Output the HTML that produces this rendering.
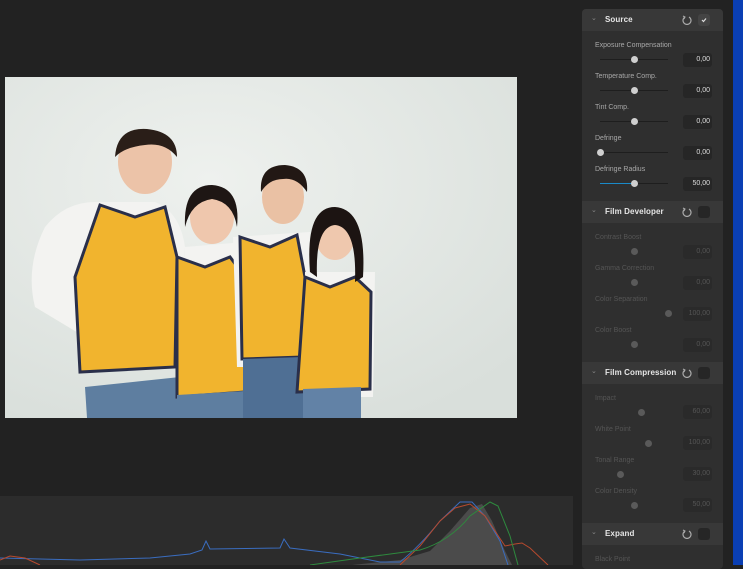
<html><head><style>
*{margin:0;padding:0;box-sizing:border-box}
body{width:743px;height:565px;background:#222;position:relative;overflow:hidden;font-family:"Liberation Sans",sans-serif}
.a{position:absolute}
.panel{left:582px;top:9px;width:141px;height:560px;background:#2f2f2f;border-radius:4px}
.hd{position:absolute;left:582px;width:141px;height:22px;background:#383838}
.hd .t{position:absolute;left:23px;top:6px;font-size:8px;font-weight:bold;color:#e6e6e6;letter-spacing:0.1px}
.hd .c{position:absolute;left:9px;top:5px;font-size:7px;color:#888}
.hd .b{position:absolute;left:116px;top:5px;width:12px;height:12px;border-radius:3px;background:#262626}
.hd svg.r{position:absolute;left:100px;top:6px}
.lb{position:absolute;left:595px;font-size:7px;color:#a8a8a8}
.tr{position:absolute;left:600px;width:68px;height:1px;background:#1e1e1e}
.kn{position:absolute;width:7px;height:7px;border-radius:50%;background:#cfcfcf}
.vb{position:absolute;left:683px;width:29px;height:14px;background:#262626;border-radius:3px;font-size:7px;color:#ddd;text-align:right;padding:3px 2px 0 0}
.dim .lb{color:#555}.dim .kn{background:#5a5a5a}.dim .vb{color:#555;background:#2a2a2a}
</style></head><body>
<div class="a" style="left:733px;top:0;width:10px;height:565px;background:#0a3fb4"></div>
<div class="a" style="left:5px;top:77px;width:512px;height:341px;background:#e3e7e3;overflow:hidden">
<svg width="512" height="341" viewBox="0 0 512 341">
<defs><radialGradient id="g" cx="0.4" cy="0.3" r="0.8"><stop offset="0" stop-color="#eef1ee"/><stop offset="1" stop-color="#d9dfdb"/></radialGradient></defs>
<rect width="512" height="341" fill="url(#g)"/>
<path d="M40 150 Q60 125 90 125 L150 125 Q175 135 180 170 L175 250 L80 260 L30 230 Q20 190 40 150Z" fill="#f3f3f1"/>
<path d="M80 310 L175 300 L172 341 L82 341Z" fill="#5e7ea0"/>
<path d="M95 128 L130 140 L160 130 L172 180 L170 290 L75 295 L70 200 Z" fill="#f1b42e" stroke="#2a2f4a" stroke-width="3"/>
<ellipse cx="140" cy="85" rx="27" ry="32" fill="#ecc3a8"/>
<path d="M110 80 Q112 50 142 52 Q172 55 172 80 Q160 65 140 68 Q120 70 110 80Z" fill="#2a1e18"/>
<path d="M180 170 L240 165 L245 330 L175 330Z" fill="#f3f3f1"/>
<path d="M172 180 L200 190 L225 180 L240 200 L240 315 L172 320 Z" fill="#f1b42e" stroke="#2a2f4a" stroke-width="3"/>
<path d="M172 318 L240 314 L240 341 L172 341Z" fill="#5e7ea0"/>
<ellipse cx="207" cy="140" rx="22" ry="27" fill="#efc7ad"/>
<path d="M180 150 Q178 108 207 108 Q236 110 232 150 Q228 125 207 122 Q186 125 180 150Z" fill="#1e1614"/>
<path d="M228 160 L305 155 L302 290 L232 290Z" fill="#f3f3f1"/>
<path d="M235 160 L265 170 L292 158 L300 200 L298 280 L237 282 Z" fill="#f1b42e" stroke="#2a2f4a" stroke-width="3"/>
<path d="M238 282 L298 280 L300 341 L238 341Z" fill="#4f6f94"/>
<ellipse cx="278" cy="120" rx="21" ry="27" fill="#eac1a4"/>
<path d="M256 115 Q254 88 280 88 Q304 90 302 115 Q292 100 278 102 Q264 102 256 115Z" fill="#221814"/>
<path d="M300 195 L370 195 L368 320 L298 320Z" fill="#f3f3f1"/>
<path d="M300 200 L325 210 L350 200 L366 215 L365 312 L292 315 Z" fill="#f1b42e" stroke="#2a2f4a" stroke-width="3"/>
<path d="M298 312 L356 310 L356 341 L298 341Z" fill="#6282a6"/>
<ellipse cx="330" cy="158" rx="20" ry="25" fill="#efc8ae"/>
<path d="M305 195 Q300 130 330 130 Q362 132 358 200 L350 205 Q352 150 330 148 Q310 150 312 200Z" fill="#1c1412"/>
</svg></div>
<div class="a" style="left:0;top:496px;width:573px;height:69px;background:#2c2c2c">
<svg width="573" height="69" viewBox="0 0 573 69">
<path d="M352 69 L400 64 L430 55 L450 35 L470 12 L482 8 L492 25 L505 55 L512 69Z" fill="#4b4b4b"/>
<path d="M0 62 L80 64 L150 62 L190 58 L202 54 L206 45 L210 53 L280 52 L284 43 L290 52 L340 58 L380 66 L400 66 Q420 50 440 25 L460 6 L472 6 L485 20 L500 45 L505 60 L508 69" fill="none" stroke="#3a6dc0" stroke-width="1"/>
<path d="M0 64 L10 60 L25 62 L40 69 M400 69 L420 50 L440 25 L455 12 L470 8 L485 20 L505 50 L515 48 L522 47 L530 52 L548 69" fill="none" stroke="#b84a2e" stroke-width="1"/>
<path d="M310 69 L360 62 L420 54 Q450 45 470 20 L490 6 L498 10 L510 40 L518 69" fill="none" stroke="#2e8a3e" stroke-width="1"/>
</svg></div>
<div class="a panel"></div>
<div class="hd" style="top:9px;border-radius:4px 4px 0 0"><span class="c">&#8964;</span><span class="t">Source</span><svg class="r" width="10" height="10" viewBox="0 0 10 10"><path d="M3 2 A4 4 0 1 0 7 2" fill="none" stroke="#aaa" stroke-width="1.2"/><path d="M1 1 L3 2 L2 4" fill="none" stroke="#aaa"/></svg><span class="b" style="background:#444"><svg width="12" height="12"><path d="M4 6 L5.5 7.5 L8 4.5" stroke="#ddd" fill="none" stroke-width="1.2"/></svg></span></div>
<div class="lb" style="top:42px">Exposure Compensation</div><div class="tr" style="top:59px"></div><div class="kn" style="left:631px;top:56px"></div><div class="vb" style="top:53px">0,00</div>
<div class="lb" style="top:73px">Temperature Comp.</div><div class="tr" style="top:90px"></div><div class="kn" style="left:631px;top:87px"></div><div class="vb" style="top:84px">0,00</div>
<div class="lb" style="top:104px">Tint Comp.</div><div class="tr" style="top:121px"></div><div class="kn" style="left:631px;top:118px"></div><div class="vb" style="top:115px">0,00</div>
<div class="lb" style="top:135px">Defringe</div><div class="tr" style="top:152px"></div><div class="kn" style="left:597px;top:149px"></div><div class="vb" style="top:146px">0,00</div>
<div class="lb" style="top:166px">Defringe Radius</div><div class="tr" style="top:183px"></div><div class="a" style="left:600px;top:183px;width:34px;height:1px;background:#1a8ac8"></div><div class="kn" style="left:631px;top:180px"></div><div class="vb" style="top:177px">50,00</div>

<div class="hd" style="top:201px"><span class="c">&#8964;</span><span class="t">Film Developer</span><svg class="r" width="10" height="10" viewBox="0 0 10 10"><path d="M3 2 A4 4 0 1 0 7 2" fill="none" stroke="#aaa" stroke-width="1.2"/><path d="M1 1 L3 2 L2 4" fill="none" stroke="#aaa"/></svg><span class="b"></span></div>
<div class="dim">
<div class="lb" style="top:234px">Contrast Boost</div><div class="kn" style="left:631px;top:248px"></div><div class="vb" style="top:245px">0,00</div>
<div class="lb" style="top:265px">Gamma Correction</div><div class="kn" style="left:631px;top:279px"></div><div class="vb" style="top:276px">0,00</div>
<div class="lb" style="top:296px">Color Separation</div><div class="kn" style="left:665px;top:310px"></div><div class="vb" style="top:307px">100,00</div>
<div class="lb" style="top:327px">Color Boost</div><div class="kn" style="left:631px;top:341px"></div><div class="vb" style="top:338px">0,00</div>
</div>
<div class="hd" style="top:362px"><span class="c">&#8964;</span><span class="t">Film Compression</span><svg class="r" width="10" height="10" viewBox="0 0 10 10"><path d="M3 2 A4 4 0 1 0 7 2" fill="none" stroke="#aaa" stroke-width="1.2"/><path d="M1 1 L3 2 L2 4" fill="none" stroke="#aaa"/></svg><span class="b"></span></div>
<div class="dim">
<div class="lb" style="top:395px">Impact</div><div class="kn" style="left:638px;top:409px"></div><div class="vb" style="top:405px">60,00</div>
<div class="lb" style="top:426px">White Point</div><div class="kn" style="left:645px;top:440px"></div><div class="vb" style="top:436px">100,00</div>
<div class="lb" style="top:457px">Tonal Range</div><div class="kn" style="left:617px;top:471px"></div><div class="vb" style="top:467px">30,00</div>
<div class="lb" style="top:488px">Color Density</div><div class="kn" style="left:631px;top:502px"></div><div class="vb" style="top:498px">50,00</div>
</div>
<div class="hd" style="top:523px"><span class="c">&#8964;</span><span class="t">Expand</span><svg class="r" width="10" height="10" viewBox="0 0 10 10"><path d="M3 2 A4 4 0 1 0 7 2" fill="none" stroke="#aaa" stroke-width="1.2"/><path d="M1 1 L3 2 L2 4" fill="none" stroke="#aaa"/></svg><span class="b"></span></div>
<div class="dim"><div class="lb" style="top:556px">Black Point</div></div>
</body></html>
